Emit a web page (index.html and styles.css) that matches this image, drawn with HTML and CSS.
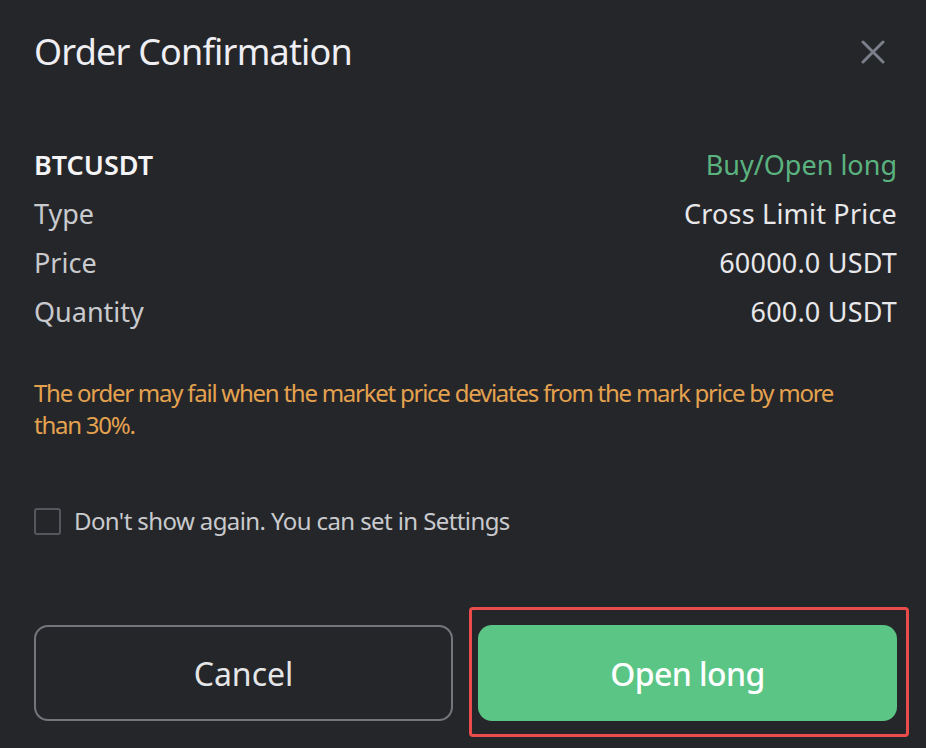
FILE: index.html
```html
<!DOCTYPE html>
<html lang="en">
<head>
    <meta charset="UTF-8">
    <meta name="viewport" content="width=device-width, initial-scale=1.0">
    <title>Order Confirmation</title>
    <link rel="stylesheet" href="styles.css">
</head>
<body>
    <div class="dialog">
        <div class="dialog-header">
            <h1>Order Confirmation</h1>
            <button class="close-btn" aria-label="Close">
                <svg width="24" height="24" viewBox="0 0 24 24">
                    <path d="M2 2 L22 22 M22 2 L2 22" stroke="#7b7f89" stroke-width="3" stroke-linecap="round" fill="none"/>
                </svg>
            </button>
        </div>

        <div class="details">
            <div class="row">
                <span class="symbol">BTCUSDT</span>
                <span class="side">Buy/Open long</span>
            </div>
            <div class="row">
                <span class="label">Type</span>
                <span class="value">Cross Limit Price</span>
            </div>
            <div class="row">
                <span class="label">Price</span>
                <span class="value">60000.0 USDT</span>
            </div>
            <div class="row">
                <span class="label">Quantity</span>
                <span class="value">600.0 USDT</span>
            </div>
        </div>

        <p class="warning">The order may fail when the market price deviates from the mark price by more than 30%.</p>

        <label class="check-row">
            <input type="checkbox">
            <span class="box"></span>
            <span>Don't show again. You can set in Settings</span>
        </label>

        <div class="actions">
            <button class="btn btn-cancel">Cancel</button>
            <button class="btn btn-confirm">Open long</button>
        </div>
    </div>
</body>
</html>
```

FILE: styles.css
```css
body { margin: 0; background: #25262a; font-family: 'Noto Sans', 'Open Sans', Arial, sans-serif; color: #e8e8eb; }
.dialog { width: 926px; height: 748px; box-sizing: border-box; padding: 28px 29px 0 34px; overflow: hidden; }
.dialog-header { display: flex; justify-content: space-between; align-items: center; height: 48px; }
h1 { margin: 0; font-size: 36px; line-height: 48px; font-weight: 400; letter-spacing: -0.8px; color: #eeeef3; }
.close-btn { background: none; border: none; padding: 0; margin-right: 12px; width: 24px; height: 24px; cursor: pointer; }
.close-btn svg { display: block; }
.details { margin-top: 64px; }
.row { display: flex; justify-content: space-between; font-size: 27px; line-height: 49px; }
.symbol { font-weight: 600; color: #f4f4f6; }
.side { color: #5ab37f; }
.label { color: #c9cacd; }
.value { color: #e8e8ea; letter-spacing: 0.2px; }
.warning { margin: 41px 24px 0 0; font-size: 24px; line-height: 32px; letter-spacing: -1.25px; color: #e4a24f; }
.check-row { display: flex; align-items: center; gap: 13px; margin-top: 64px; font-size: 24px; line-height: 32px; letter-spacing: -0.6px; color: #c9cacd; cursor: pointer; }
.check-row input { display: none; }
.box { width: 23px; height: 23px; border: 2px solid #55575d; border-radius: 3px; }
.actions { display: grid; grid-template-columns: 1fr 1fr; gap: 25px; margin-top: 88px; }
.btn { height: 96px; border-radius: 14px; font-family: inherit; font-size: 32px; cursor: pointer; }
.btn-cancel { background: transparent; border: 2px solid #74767b; color: #e6e6e8; }
.btn-confirm { position: relative; background: #5bc585; border: none; color: #fff; font-weight: 500; letter-spacing: -0.6px; }
.btn-confirm::after { content: ''; position: absolute; top: -18px; left: -9px; right: -12px; bottom: -16px; border: 3px solid #ea4b4b; border-radius: 4px; pointer-events: none; }
```
